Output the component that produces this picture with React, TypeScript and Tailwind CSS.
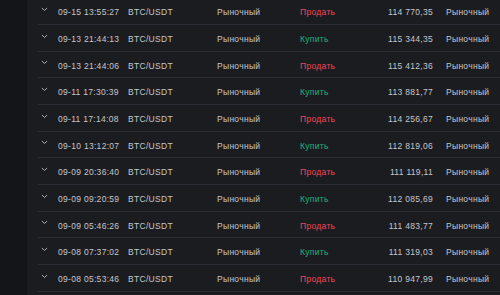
import React from "react";

type Trade = {
  time: string;
  side: "buy" | "sell";
  price: string;
};

const trades: Trade[] = [
  { time: "09-15 13:55:27", side: "sell", price: "114 770,35" },
  { time: "09-13 21:44:13", side: "buy", price: "115 344,35" },
  { time: "09-13 21:44:06", side: "sell", price: "115 412,36" },
  { time: "09-11 17:30:39", side: "buy", price: "113 881,77" },
  { time: "09-11 17:14:08", side: "sell", price: "114 256,67" },
  { time: "09-10 13:12:07", side: "buy", price: "112 819,06" },
  { time: "09-09 20:36:40", side: "sell", price: "111 119,11" },
  { time: "09-09 09:20:59", side: "buy", price: "112 085,69" },
  { time: "09-09 05:46:26", side: "sell", price: "111 483,77" },
  { time: "09-08 07:37:02", side: "buy", price: "111 319,03" },
  { time: "09-08 05:53:46", side: "sell", price: "110 947,99" },
];

function Chevron() {
  return (
    <svg width="7" height="5" viewBox="0 0 7 5" fill="none" className="-mt-[6px]">
      <path d="M1.2 1.3L3.5 3.5L5.8 1.3" stroke="#aeb1b9" strokeWidth="1" strokeLinecap="round" strokeLinejoin="round" />
    </svg>
  );
}

function Row({ trade }: { trade: Trade }) {
  return (
    <div className="flex items-center h-[26.67px] border-b border-[#2a2d35] pt-[3px] text-[8.5px] tracking-[0.3px] text-[#c6c7cb] whitespace-nowrap">
      <div className="w-[20px] pl-[3px] flex items-center">
        <Chevron />
      </div>
      <div className="w-[70px]">{trade.time}</div>
      <div className="w-[89px]">BTC/USDT</div>
      <div className="w-[83px]">Рыночный</div>
      <div
        className={
          trade.side === "buy"
            ? "w-[60px] text-[#22b07c]"
            : "w-[60px] text-[#f0475b]"
        }
      >
        {trade.side === "buy" ? "Купить" : "Продать"}
      </div>
      <div className="w-[73px] text-right">{trade.price}</div>
      <div className="pl-[13px]">Рыночный</div>
    </div>
  );
}

export default function App() {
  return (
    <div
      className="flex w-[500px] h-[295px] overflow-hidden bg-[#1b1c20]"
      style={{ fontFamily: '"Liberation Sans", Arial, sans-serif' }}
    >
      {/* left sidebar strip */}
      <div className="w-[27px] shrink-0 bg-[#141518]" />

      {/* order history */}
      <div className="flex-1 pl-[11px] -mt-[1.67px]">
        {trades.map((t, i) => (
          <Row key={i} trade={t} />
        ))}
      </div>
    </div>
  );
}
